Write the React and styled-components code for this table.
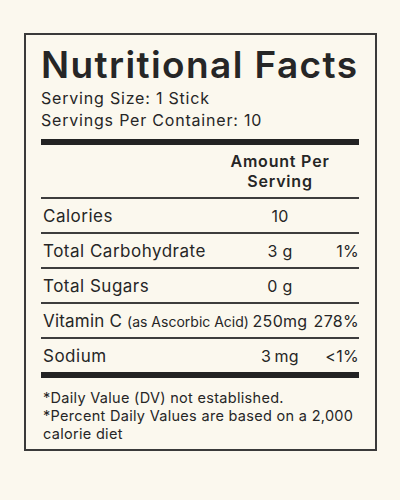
import React from "react";
import styled, { createGlobalStyle } from "styled-components";

const GlobalStyle = createGlobalStyle`
  html, body {
    margin: 0;
    padding: 0;
    background: #fbf8ee;
  }
  body {
    font-family: Inter, "Noto Sans", sans-serif;
    color: #262626;
  }
`;

const Page = styled.div`
  width: 400px;
  height: 500px;
  padding: 33px 23px 0 24px;
  box-sizing: border-box;
`;

const Label = styled.div`
  border: 2px solid #3a3a3a;
  padding: 8px 16px 6px 15px;
`;

const Title = styled.h1`
  margin: 0;
  font-size: 37px;
  font-weight: 600;
  line-height: 44px;
  letter-spacing: 1.4px;
  white-space: nowrap;
`;

const Serving = styled.div`
  font-size: 16px;
  line-height: 22px;
  letter-spacing: 0.8px;
`;

const ThickBar = styled.div`
  height: 6px;
  background: #232323;
  margin: ${({ $m }) => $m || "0"};
`;

const Table = styled.div`
  display: grid;
  grid-template-columns: minmax(0, 1fr) 62px 48px;
`;

const HeadCell = styled.div`
  grid-column: 2;
  display: flex;
  justify-content: center;
  text-align: center;
  white-space: nowrap;
  font-size: 16px;
  font-weight: 600;
  line-height: 20px;
  letter-spacing: 0.8px;
  padding: 6px 0 6px;
`;

const Row = styled.div`
  grid-column: 1 / 4;
  display: grid;
  grid-template-columns: subgrid;
  align-items: center;
  height: 33px;
  border-top: 2px solid #3d3d3d;
  font-size: 17px;
  letter-spacing: ${({ $tight }) => ($tight ? "0.2px" : "0.5px")};
`;

const Name = styled.span`
  padding-left: 2px;
  white-space: nowrap;
`;

const Note = styled.span`
  font-size: 14px;
  letter-spacing: 0;
`;

const Amount = styled.span`
  text-align: center;
  white-space: nowrap;
  font-size: 16px;
  letter-spacing: 0.3px;
`;

const Percent = styled.span`
  text-align: right;
  white-space: nowrap;
  font-size: 16px;
  letter-spacing: 0.3px;
`;

const Foot = styled.div`
  font-size: 14.5px;
  line-height: 18px;
  letter-spacing: 0.3px;
  padding: 11px 0 0 2px;
`;

const rows = [
  { name: "Calories", amount: "10", pct: "" },
  { name: "Total Carbohydrate", amount: "3 g", pct: "1%" },
  { name: "Total Sugars", amount: "0 g", pct: "" },
  { name: "Vitamin C", note: "(as Ascorbic Acid)", amount: "250mg", pct: "278%" },
  { name: "Sodium", amount: "3\u2009mg", pct: "<1%" },
];

export default function App() {
  return (
    <Page>
      <GlobalStyle />
      <Label>
        <Title>Nutritional Facts</Title>
        <Serving>Serving Size: 1 Stick</Serving>
        <Serving>Servings Per Container: 10</Serving>
        <ThickBar $m="8px 0 0" />
        <Table>
          <HeadCell>
            Amount Per
            <br />
            Serving
          </HeadCell>
          {rows.map((r) => (
            <Row key={r.name} $tight={!!r.note}>
              <Name>
                {r.name} {r.note && <Note>{r.note}</Note>}
              </Name>
              <Amount>{r.amount}</Amount>
              <Percent>{r.pct}</Percent>
            </Row>
          ))}
        </Table>
        <ThickBar />
        <Foot>
          *Daily Value (DV) not established.
          <br />
          *Percent Daily Values are based on a 2,000 calorie diet
        </Foot>
      </Label>
    </Page>
  );
}
